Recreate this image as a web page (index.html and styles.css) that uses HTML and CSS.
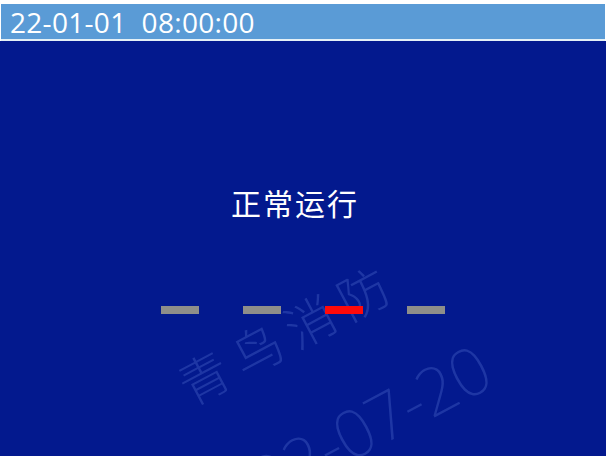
FILE: index.html
```html
<!DOCTYPE html>
<html lang="zh-CN">
<head>
<meta charset="utf-8">
<title>正常运行</title>
<link rel="stylesheet" href="styles.css">
</head>
<body>
<div class="screen">
  <header class="topbar">
    <span class="clock">22-01-01&nbsp;&nbsp;08:00:00</span>
  </header>
  <main class="panel">
    <div class="watermark">
      <div class="wm-name">青鸟消防</div>
      <div class="wm-date">2022-07-20</div>
    </div>
    <div class="status">正常运行</div>
    <div class="dashes">
      <span class="dash"></span>
      <span class="dash"></span>
      <span class="dash active"></span>
      <span class="dash"></span>
    </div>
  </main>
</div>
</body>
</html>
```

FILE: styles.css
```css
html, body {
  margin: 0;
  padding: 0;
  background: #ffffff;
}
.screen {
  width: 606px;
  height: 456px;
  display: flex;
  flex-direction: column;
  overflow: hidden;
  font-family: "Open Sans", "Noto Sans CJK SC", sans-serif;
}
.topbar {
  height: 35px;
  margin-top: 4px;
  background: #5a9bd6;
  border-bottom: 2px solid #e4f0f6;
  display: flex;
  align-items: center;
  padding-left: 9px;
  margin-left: 1px;
  margin-right: 1px;
}
.clock {
  color: #ffffff;
  font-size: 28px;
  line-height: 1;
  letter-spacing: 0.3px;
}
.panel {
  flex: 1;
  position: relative;
  background: #03198e;
  display: flex;
  flex-direction: column;
  align-items: center;
  overflow: hidden;
}
.status {
  position: relative;
  margin-top: 143px;
  margin-right: 16px;
  color: #ffffff;
  font-family: "Noto Sans CJK SC", sans-serif;
  font-size: 30px;
  line-height: 36px;
  letter-spacing: 2px;
}
.dashes {
  position: relative;
  margin-top: 86px;
  display: flex;
  gap: 44px;
}
.dash {
  width: 38px;
  height: 8px;
  background: #8e8e8a;
}
.dash.active {
  background: #ff0a0a;
}
.watermark {
  position: absolute;
  left: 169px;
  top: 324px;
  transform: rotate(-28deg);
  transform-origin: left top;
  color: rgba(140, 170, 255, 0.2);
  font-family: "Noto Sans CJK SC", sans-serif;
  font-weight: 300;
  pointer-events: none;
  white-space: nowrap;
}
.wm-name {
  font-size: 50px;
  line-height: 50px;
  letter-spacing: 10px;
}
.wm-date {
  font-family: "Noto Sans", "Liberation Sans", sans-serif;
  font-weight: 200;
  font-size: 66px;
  line-height: 66px;
  margin-top: 62px;
  margin-left: -54px;
  letter-spacing: -1px;
}
```
